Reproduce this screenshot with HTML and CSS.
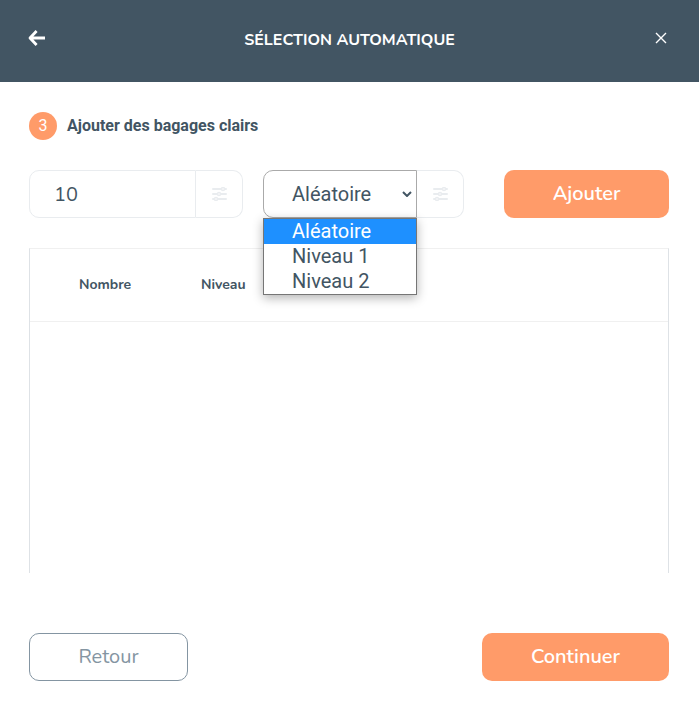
FILE: index.html
```html
<!DOCTYPE html>
<html lang="fr">
<head>
    <meta charset="UTF-8">
    <meta name="viewport" content="width=device-width, initial-scale=1.0">
    <title>Sélection automatique</title>
    <link rel="stylesheet" href="styles.css">
</head>
<body>
    <header class="header">
        <button type="button" class="icon-button" aria-label="Précédent">
            <svg width="18" height="16" viewBox="0 0 18 16" fill="none" stroke="#fff" stroke-width="2.8" stroke-linejoin="round">
                <path d="M8.6 1 2 8l6.6 7M2 8h15"/>
            </svg>
        </button>
        <h1>SÉLECTION AUTOMATIQUE</h1>
        <button type="button" class="icon-button close" aria-label="Fermer">
            <svg width="12" height="12" viewBox="0 0 12 12" fill="none" stroke="#fff" stroke-width="1.4">
                <path d="M1 1l10 10M11 1 1 11"/>
            </svg>
        </button>
    </header>

    <main class="content">
        <div class="step">
            <span class="step-number">3</span>
            <h2>Ajouter des bagages clairs</h2>
        </div>

        <form class="bag-form">
            <div class="field">
                <input type="text" id="nombre" name="nombre" value="10" aria-label="Nombre">
                <label for="nombre" class="addon">
                    <svg width="15" height="14" viewBox="0 0 15 14" fill="none" stroke="#e9ecef" stroke-width="2" stroke-linecap="round">
                        <path d="M1 2h8M13 2h1M1 7h4M9 7h5M1 12h1M6 12h8"/>
                        <g fill="#fff" stroke-width="1.5">
                            <circle cx="11" cy="2" r="1.5"/>
                            <circle cx="7" cy="7" r="1.5"/>
                            <circle cx="4" cy="12" r="1.5"/>
                        </g>
                    </svg>
                </label>
            </div>

            <div class="field">
                <div class="select-wrap">
                    <select id="niveau" name="niveau" aria-label="Niveau">
                        <option value="0">Aléatoire</option>
                        <option value="1">Niveau 1</option>
                        <option value="2">Niveau 2</option>
                    </select>
                    <svg class="chevron" width="10" height="6" viewBox="0 0 10 6" fill="none" stroke="#425563" stroke-width="2">
                        <path d="M1 1l4 4 4-4"/>
                    </svg>
                    <ul class="options">
                        <li class="selected">Aléatoire</li>
                        <li>Niveau 1</li>
                        <li>Niveau 2</li>
                    </ul>
                </div>
                <label for="niveau" class="addon">
                    <svg width="15" height="14" viewBox="0 0 15 14" fill="none" stroke="#e9ecef" stroke-width="2" stroke-linecap="round">
                        <path d="M1 2h8M13 2h1M1 7h4M9 7h5M1 12h1M6 12h8"/>
                        <g fill="#fff" stroke-width="1.5">
                            <circle cx="11" cy="2" r="1.5"/>
                            <circle cx="7" cy="7" r="1.5"/>
                            <circle cx="4" cy="12" r="1.5"/>
                        </g>
                    </svg>
                </label>
            </div>

            <button type="submit" class="btn btn-primary btn-add">Ajouter</button>
        </form>

        <div class="table-box">
            <table>
                <thead>
                    <tr>
                        <th class="col-nombre">Nombre</th>
                        <th>Niveau</th>
                    </tr>
                </thead>
                <tbody></tbody>
            </table>
        </div>

        <div class="actions">
            <button type="button" class="btn btn-outline">Retour</button>
            <button type="button" class="btn btn-primary btn-next">Continuer</button>
        </div>
    </main>
</body>
</html>
```
FILE: styles.css
```css
* {
    box-sizing: border-box;
}
body {
    margin: 0;
    background-color: #fff;
    color: #425563;
    font-family: Nunito, "Noto Sans", sans-serif;
}
button {
    font-family: inherit;
    cursor: pointer;
}
.header {
    display: flex;
    align-items: center;
    justify-content: space-between;
    height: 82px;
    padding: 0 28px 6px;
    background-color: #425563;
    color: #fff;
}
.header h1 {
    margin: 0;
    padding-top: 3px;
    font-size: 16px;
    line-height: 20px;
    font-weight: 700;
}
.icon-button {
    display: flex;
    width: 20px;
    padding: 0;
    border: none;
    background: none;
}
.close {
    justify-content: center;
}
.content {
    padding: 30px 30px 24px 29px;
}
.step {
    display: flex;
    align-items: center;
    gap: 10px;
    font-family: Roboto, sans-serif;
}
.step-number {
    width: 28px;
    border-radius: 50%;
    background-color: #ff9b69;
    color: #fff;
    font-size: 16px;
    line-height: 28px;
    text-align: center;
}
.step h2 {
    margin: 0;
    padding-bottom: 2px;
    font-size: 16px;
    font-weight: 700;
}
.bag-form {
    display: grid;
    grid-template-columns: 214fr 201fr 185fr;
    column-gap: 20px;
    margin: 30px 0;
}
.field {
    display: flex;
    height: 48px;
}
.field input,
.field select {
    width: 100%;
    min-width: 0;
    height: 48px;
    margin: 0;
    padding: 0 24px;
    border: 1px solid #e9ecef;
    border-radius: 10px 0 0 10px;
    background-color: #fff;
    color: #425563;
    font-family: inherit;
    font-size: 20px;
}
.field select {
    appearance: none;
    padding-left: 28px;
    border-color: #aaa;
    font-family: Roboto, sans-serif;
}
.addon {
    display: flex;
    flex: none;
    align-items: center;
    justify-content: center;
    width: 47px;
    border: 1px solid #e9ecef;
    border-left: none;
    border-radius: 0 10px 10px 0;
}
.select-wrap {
    position: relative;
    flex: 1;
}
.chevron {
    position: absolute;
    top: 21px;
    right: 5px;
    pointer-events: none;
}
.options {
    position: absolute;
    top: 100%;
    left: 0;
    width: 100%;
    margin: 0;
    padding: 0;
    border: 1px solid #767676;
    background-color: #fff;
    box-shadow: 0 3px 10px rgba(0, 0, 0, 0.3);
    font-family: Roboto, sans-serif;
    font-size: 20px;
    line-height: 25px;
    list-style: none;
}
.options li {
    padding-left: 28px;
}
.options .selected {
    background-color: #1e90ff;
    color: #fff;
}
.btn {
    height: 48px;
    padding: 0 0 2px;
    border: none;
    border-radius: 10px;
    font-size: 20px;
    font-weight: 600;
}
.btn-primary {
    background-color: #ff9b69;
    color: #fff;
}
.btn-add {
    margin-left: 20px;
}
.btn-outline {
    width: 159px;
    border: 1px solid #8495a2;
    background-color: #fff;
    color: #8495a2;
    font-weight: 400;
}
.btn-next {
    width: 187px;
}
.table-box {
    height: 325px;
    border: 1px solid #dee2e6;
    border-top-color: #f0f0f0;
    border-bottom: none;
}
.table-box table {
    width: 100%;
    border-collapse: collapse;
}
.table-box th {
    height: 72px;
    padding: 0;
    border-bottom: 1px solid #f0f0f0;
    font-size: 14px;
    font-weight: 700;
    text-align: left;
}
.table-box .col-nombre {
    width: 171px;
    padding-left: 49px;
}
.actions {
    display: flex;
    justify-content: space-between;
    margin-top: 60px;
}
```
